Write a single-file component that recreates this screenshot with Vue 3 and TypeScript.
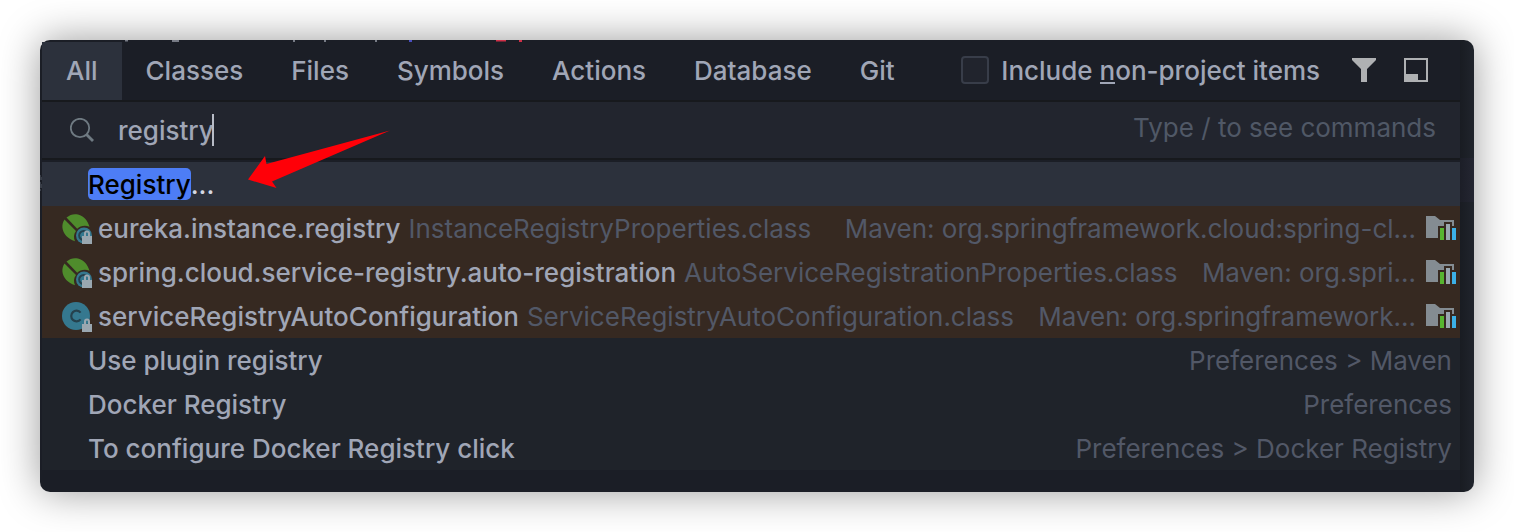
<script setup lang="ts">
import { ref } from 'vue'

interface Hit {
  kind: 'spring' | 'class'
  name: string
  file: string
  location: string
}
interface Setting {
  name: string
  path: string
}

const tabs = ['All', 'Classes', 'Files', 'Symbols', 'Actions', 'Database', 'Git']
const activeTab = ref('All')
const query = ref('registry')
const includeNonProject = ref(false)

const hits: Hit[] = [
  {
    kind: 'spring',
    name: 'eureka.instance.registry',
    file: 'InstanceRegistryProperties.class',
    location: 'Maven: org.springframework.cloud:spring-cl...',
  },
  {
    kind: 'spring',
    name: 'spring.cloud.service-registry.auto-registration',
    file: 'AutoServiceRegistrationProperties.class',
    location: 'Maven: org.spri...',
  },
  {
    kind: 'class',
    name: 'serviceRegistryAutoConfiguration',
    file: 'ServiceRegistryAutoConfiguration.class',
    location: 'Maven: org.springframework...',
  },
]

const settings: Setting[] = [
  { name: 'Use plugin registry', path: 'Preferences > Maven' },
  { name: 'Docker Registry', path: 'Preferences' },
  { name: 'To configure Docker Registry click', path: 'Preferences > Docker Registry' },
]
</script>

<template>
  <main class="window">
    <svg class="behind-top" width="500" height="2" aria-hidden="true">
      <path d="M85 .5h3M132 1h7M253 1h2M284 1h2M335 1h2" stroke="#777b85" stroke-width="2" />
      <path d="M369 1h3" stroke="#4a4fc0" stroke-width="2" />
      <path d="M456 .5h10M479 1h3" stroke="#d03048" stroke-width="2" />
    </svg>
    <svg class="behind-left" width="2" height="16" aria-hidden="true">
      <path d="M0 1h1M1 2v3M0 8h1M1 9v4M0 15h1" stroke="#565c68" stroke-width="1" />
    </svg>

    <div class="panel">
      <header class="bar">
        <nav class="tabs">
          <button
            v-for="tab in tabs"
            :key="tab"
            type="button"
            class="tab"
            :class="{ active: tab === activeTab }"
            @click="activeTab = tab"
          >{{ tab }}</button>
        </nav>
        <div class="tools">
          <label class="check">
            <input v-model="includeNonProject" type="checkbox" />
            <span class="check-text">Include <span class="mnemonic">n</span>on-project items</span>
          </label>
          <button type="button" class="tool" aria-label="Filter">
            <svg width="24" height="24" viewBox="0 0 24 24"><path d="M0 0h24v2l-9 9v13H9V11L0 2z" fill="#afb1b3" /></svg>
          </button>
          <button type="button" class="tool" aria-label="Open in tool window">
            <svg width="24" height="24" viewBox="0 0 24 24">
              <path d="M1 1h22v22H1z" fill="none" stroke="#afb1b3" stroke-width="2" />
              <path d="M1 16h13v7H1z" fill="#afb1b3" />
            </svg>
          </button>
        </div>
      </header>

      <div class="search">
        <svg class="lens" width="24" height="24" viewBox="0 0 24 24" fill="none" stroke="#6f7a82">
          <circle cx="10" cy="10" r="9.2" stroke-width="1.8" />
          <path d="M16.500 16.500l6.500 6.500" stroke-width="2.800" />
        </svg>
        <input v-model="query" class="query" type="text" aria-label="Search" spellcheck="false" />
        <span class="caret"></span>
        <span class="hint">Type / to see commands</span>
      </div>

      <ul class="results">
        <li>
          <button type="button" class="row selected"><mark>Registry</mark><span class="rest">...</span></button>
        </li>
        <li v-for="hit in hits" :key="hit.name">
          <button type="button" class="row library">
            <svg class="kind" width="32" height="34" viewBox="0 0 32 34" aria-hidden="true">
              <template v-if="hit.kind === 'spring'">
                <path d="M4.500 5.500C8 2.500 12 1.500 16 2.500C22 4 26 9 27.500 14.800C23 12.500 18 14 15.200 16.800z" fill="#4f8c2c" />
                <path d="M2.500 7.500L14 19C11.500 22 11.500 26 13 29.200C6 27 1 22 .4 15.500C.2 12.500 1 9.500 2.500 7.500z" fill="#4f8c2c" />
                <circle cx="22" cy="23.500" r="8" fill="#35788f" />
                <path d="M25 20.500a4.500 4.500 0 1 0 0 6" fill="none" stroke="#25414d" stroke-width="2" />
              </template>
              <template v-else>
                <circle cx="14" cy="16" r="14" fill="#35788f" />
                <path d="M18.600 12.600a5.300 5.300 0 1 0 0 6.800" fill="none" stroke="#25414d" stroke-width="2.200" />
              </template>
              <path d="M23 25v-3.500a2 2 0 0 1 4 0V25" fill="none" stroke="#9aa7b0" stroke-width="2" />
              <path d="M20 24h10v8H20z" fill="#9aa7b0" />
            </svg>
            <span class="name">{{ hit.name }}</span>
            <span class="file">{{ hit.file }}</span>
            <span class="location">{{ hit.location }}</span>
            <svg class="module" width="30" height="26" viewBox="0 0 30 26" aria-hidden="true">
              <path d="M0 0h9l5 4h14v6h-2V6h-8v4h-6v12H0z" fill="#848c92" />
              <path d="M14 12h4v12h-4z" fill="#57b530" />
              <path d="M20 8h4v16h-4z" fill="#9aa7b0" />
              <path d="M26 12h4v12h-4z" fill="#3cb0e6" />
            </svg>
          </button>
        </li>
        <li v-for="item in settings" :key="item.name">
          <button type="button" class="row setting">
            <span>{{ item.name }}</span>
            <span class="path">{{ item.path }}</span>
          </button>
        </li>
      </ul>
    </div>

    <svg class="arrow" width="142" height="58" viewBox="0 0 142 58" aria-hidden="true">
      <path d="M0 49.500L17 26l1.500 8L142 0.500 24 51.500l4.500 6.500z" fill="#ff0008" />
    </svg>
  </main>
</template>

<style>
body {
  margin: 0;
  background: #fff;
}
</style>

<style scoped>
.window {
  position: relative;
  box-sizing: border-box;
  margin: 40px;
  padding: 2px 14px 22px 2px;
  border-radius: 10px;
  background:
    linear-gradient(90deg, #191c22, #20242c) right 0 top 0 / 14px 118px no-repeat,
    linear-gradient(90deg, #1c1e27, #242632) right 0 top 118px / 14px 44px no-repeat,
    linear-gradient(90deg, #191c22, #20242c) right 0 bottom 0 / 14px 100% no-repeat,
    #1b1e26;
  box-shadow: 0 0 40px rgba(0, 0, 0, 0.4);
  color: #a0a6b6;
  font: 500 26px/32px Inter, "Liberation Sans", sans-serif;
}

button,
input {
  margin: 0;
  padding: 0;
  border: 0;
  outline: 0;
  border-radius: 0;
  background: none;
  color: inherit;
  font: inherit;
}

button {
  cursor: pointer;
}

svg {
  display: block;
  flex: none;
}

.behind-top {
  position: absolute;
  left: 0;
  top: 0;
}

.behind-left {
  position: absolute;
  left: 0;
  top: 135px;
}

.bar {
  display: flex;
  justify-content: space-between;
  height: 58px;
  border-bottom: 2px solid #17191d;
  background: #1b1e26;
}

.tabs {
  display: flex;
}

.tab {
  padding: 0 24px;
  white-space: nowrap;
}

.tab.active {
  background: #2c313c;
}

.tools {
  display: flex;
  align-items: center;
  padding-right: 32px;
  padding-bottom: 2px;
}

.check {
  display: flex;
  align-items: center;
  gap: 12px;
  margin-right: 32px;
  white-space: nowrap;
}

.check input {
  appearance: none;
  box-sizing: border-box;
  width: 28px;
  height: 28px;
  border: 2px solid #383d49;
  border-radius: 4px;
  background: #21242d;
}

.check input:checked {
  background: #4d7df6;
}

.check-text {
  padding-top: 2px;
}

.mnemonic {
  display: inline-block;
  line-height: 22px;
  box-shadow: 0 2px #a0a6b6;
}

.tool + .tool {
  margin-left: 28px;
}

.search {
  display: flex;
  align-items: center;
  height: 56px;
  padding: 0 24px 0 28px;
  border-bottom: 2px solid #17191d;
  background: #22252e;
}

.query {
  field-sizing: content;
  height: 32px;
  margin-left: 24px;
  padding-top: 2px;
}

.caret {
  width: 2px;
  height: 32px;
  margin-left: -2px;
  background: #b8bcc6;
}

.hint {
  margin-left: auto;
  padding-bottom: 4px;
  color: #505866;
  font-weight: 400;
}

.results {
  margin: 0;
  padding: 2px 0 0;
  list-style: none;
}

.row {
  display: flex;
  align-items: center;
  width: 100%;
  height: 44px;
  padding: 2px 0 0;
  text-align: left;
  white-space: nowrap;
}

.selected {
  padding-top: 0;
  padding-left: 46px;
  background: #2c313c;
  color: #d4d8e2;
}

mark {
  padding-top: 2px;
  border-radius: 5px;
  background: #4d7df6;
  color: #000;
  line-height: 30px;
}

.rest {
  padding-top: 2px;
}

.library {
  padding-right: 4px;
  padding-left: 20px;
  background: #362921;
}

.name {
  margin-left: 4px;
}

.file,
.location,
.path {
  color: #525867;
  font-weight: 400;
}

.file {
  margin-left: 8px;
}

.location {
  margin-left: auto;
}

.module {
  margin-left: 10px;
}

.setting {
  justify-content: space-between;
  padding-right: 8px;
  padding-left: 46px;
  background: #1f232a;
}

.arrow {
  position: absolute;
  left: 208px;
  top: 90px;
  pointer-events: none;
}
</style>
